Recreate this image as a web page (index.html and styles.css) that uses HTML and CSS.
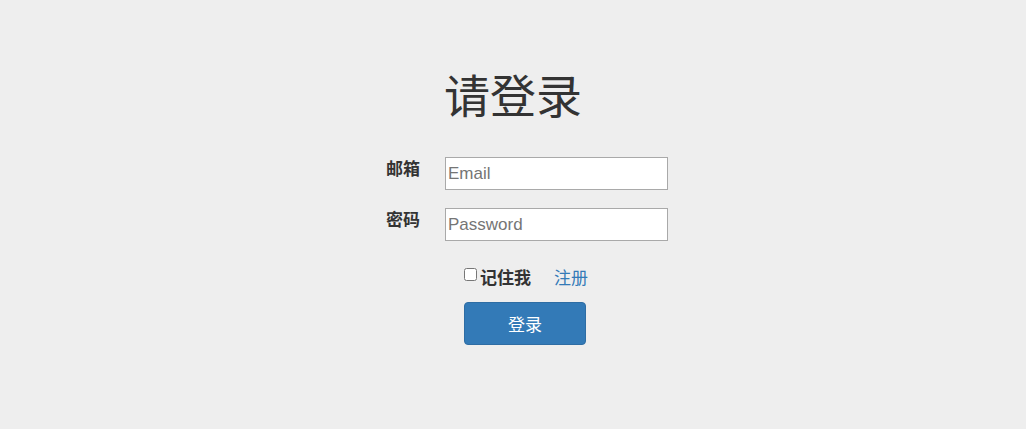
FILE: index.html
```html
<!DOCTYPE html>
<html lang="zh-CN">
  <head>
    <meta charset="UTF-8" />
    <meta name="viewport" content="width=device-width, initial-scale=1.0" />
    <title>请登录</title>
    <link rel="stylesheet" href="styles.css">
  </head>
  <body>
    <div class="login">
      <h1 class="login-title">请登录</h1>
      <form class="login-form">
        <div class="form-row">
          <label class="form-label" for="email">邮箱</label>
          <input class="form-input" id="email" type="text" placeholder="Email" />
        </div>
        <div class="form-row">
          <label class="form-label" for="password">密码</label>
          <input class="form-input" id="password" type="password" placeholder="Password" />
        </div>
        <div class="form-extra">
          <label class="remember"><input type="checkbox" class="remember-box" />记住我</label>
          <a class="register" href="#">注册</a>
        </div>
        <div class="form-actions">
          <button type="button" class="btn-login">登录</button>
        </div>
      </form>
    </div>
  </body>
</html>
```
FILE: styles.css
```css
html, body {
  margin: 0;
  padding: 0;
}
body {
  background: #eeeeee;
  color: #333333;
  font-family: "Liberation Sans", "Noto Sans CJK SC", sans-serif;
  font-size: 17px;
}
.login {
  width: 1026px;
  padding-top: 69px;
}
.login-title {
  margin: 0 0 32px 0;
  text-align: center;
  font-size: 46px;
  font-weight: 400;
  line-height: 56px;
  color: #333333;
}
.login-form {
  width: 310px;
  margin: 0 auto;
  box-sizing: border-box;
  padding-left: 28px;
}
.form-row {
  display: flex;
  align-items: flex-start;
  height: 33px;
  margin-bottom: 18px;
}
.form-label {
  width: 61px;
  font-weight: 700;
  line-height: 25px;
}
.form-input {
  width: 223px;
  height: 33px;
  box-sizing: border-box;
  margin: 0;
  padding: 1px 2px;
  border: 1px solid #a9a9a9;
  background: #ffffff;
  font-family: "Liberation Sans", sans-serif;
  font-size: 17px;
  color: #333333;
}
.form-input::placeholder {
  color: #757575;
}
.form-extra {
  display: flex;
  align-items: center;
  padding-left: 78px;
  margin-top: 23px;
  height: 24px;
}
.remember {
  display: flex;
  align-items: center;
  font-weight: 700;
}
.remember-box {
  width: 13px;
  height: 13px;
  margin: 0 3px 4px 0;
}
.register {
  margin-left: 23px;
  color: #337ab7;
  text-decoration: none;
}
.form-actions {
  padding-left: 78px;
  margin-top: 14px;
}
.btn-login {
  width: 122px;
  height: 43px;
  border: 1px solid #2e6da4;
  border-radius: 4px;
  background: #337ab7;
  color: #ffffff;
  font-family: "Liberation Sans", "Noto Sans CJK SC", sans-serif;
  font-size: 17px;
  padding: 0;
}
```
